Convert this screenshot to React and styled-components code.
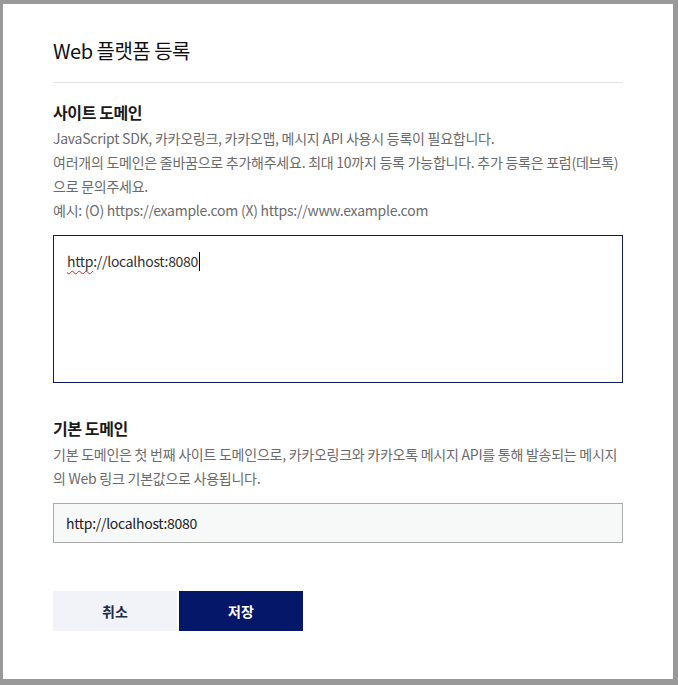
import React from "react";
import styled, { createGlobalStyle } from "styled-components";

const Global = createGlobalStyle`
  html, body { margin: 0; padding: 0; background: #999999; }
  body { font-family: "Noto Sans CJK KR", "Noto Sans", sans-serif; }
  * { box-sizing: border-box; }
`;

const Backdrop = styled.div`
  width: 678px;
  height: 685px;
  padding: 4px 5px 6px 3px;
  background: #999999;
`;

const Modal = styled.div`
  width: 670px;
  height: 675px;
  background: #ffffff;
  padding: 0 50px;
  display: flex;
  flex-direction: column;
`;

const Header = styled.div`
  padding: 32px 0 16px;
  border-bottom: 1px solid #e3e3e3;
`;

const Title = styled.h2`
  margin: 0;
  font-size: 20px;
  line-height: 30px;
  font-weight: 400;
  color: #111111;
  letter-spacing: -0.5px;
`;

const Section = styled.section`
  display: flex;
  flex-direction: column;
  margin-top: ${(p) => p.$top}px;
`;

const SectionTitle = styled.h3`
  margin: 0 0 2px;
  font-size: 16px;
  line-height: 24px;
  font-weight: 700;
  color: #1a1a1a;
  letter-spacing: -0.4px;
`;

const Desc = styled.p`
  margin: 0;
  font-size: 14px;
  line-height: 24px;
  color: #6b6b6b;
  letter-spacing: -0.25px;
`;

const TextArea = styled.div`
  margin-top: 13px;
  height: 148px;
  border: 1px solid #0e1a5e;
  padding: 13px 13px;
  font-size: 14px;
  line-height: 24px;
  color: #333333;
  letter-spacing: -0.3px;
`;

const Misspelled = styled.span`
  text-decoration: underline wavy #e0202a;
  text-decoration-thickness: 1px;
  text-underline-offset: 3px;
`;

const Caret = styled.span`
  display: inline-block;
  width: 1px;
  height: 19px;
  background: #000;
  vertical-align: -4px;
  margin-left: 1px;
`;

const Input = styled.div`
  margin-top: 13px;
  height: 40px;
  border: 1px solid #aaaaaa;
  background: #f7f8f8;
  padding: 0 12px;
  display: flex;
  align-items: center;
  font-size: 14px;
  color: #222222;
  letter-spacing: -0.3px;
`;

const Actions = styled.div`
  margin-top: 48px;
  display: flex;
  gap: 2px;
`;

const Button = styled.button`
  width: 124px;
  height: 40px;
  border: none;
  padding: 0;
  font-family: inherit;
  font-size: 14px;
  font-weight: 700;
  background: ${(p) => (p.$primary ? "#041769" : "#f2f3f8")};
  color: ${(p) => (p.$primary ? "#ffffff" : "#222a44")};
  cursor: pointer;
`;

export default function App() {
  return (
    <>
      <Global />
      <Backdrop>
        <Modal>
          <Header>
            <Title>Web 플랫폼 등록</Title>
          </Header>
          <Section $top={17}>
            <SectionTitle>사이트 도메인</SectionTitle>
            <Desc>JavaScript SDK, 카카오링크, 카카오맵, 메시지 API 사용시 등록이 필요합니다.</Desc>
            <Desc>여러개의 도메인은 줄바꿈으로 추가해주세요. 최대 10까지 등록 가능합니다. 추가 등록은 포럼(데브톡)으로 문의주세요.</Desc>
            <Desc>예시: (O) https://example.com (X) https://www.example.com</Desc>
            <TextArea>
              <Misspelled>http</Misspelled>://localhost:8080<Caret />
            </TextArea>
          </Section>
          <Section $top={33}>
            <SectionTitle>기본 도메인</SectionTitle>
            <Desc>기본 도메인은 첫 번째 사이트 도메인으로, 카카오링크와 카카오톡 메시지 API를 통해 발송되는 메시지의 Web 링크 기본값으로 사용됩니다.</Desc>
            <Input>http://localhost:8080</Input>
          </Section>
          <Actions>
            <Button>취소</Button>
            <Button $primary>저장</Button>
          </Actions>
        </Modal>
      </Backdrop>
    </>
  );
}
